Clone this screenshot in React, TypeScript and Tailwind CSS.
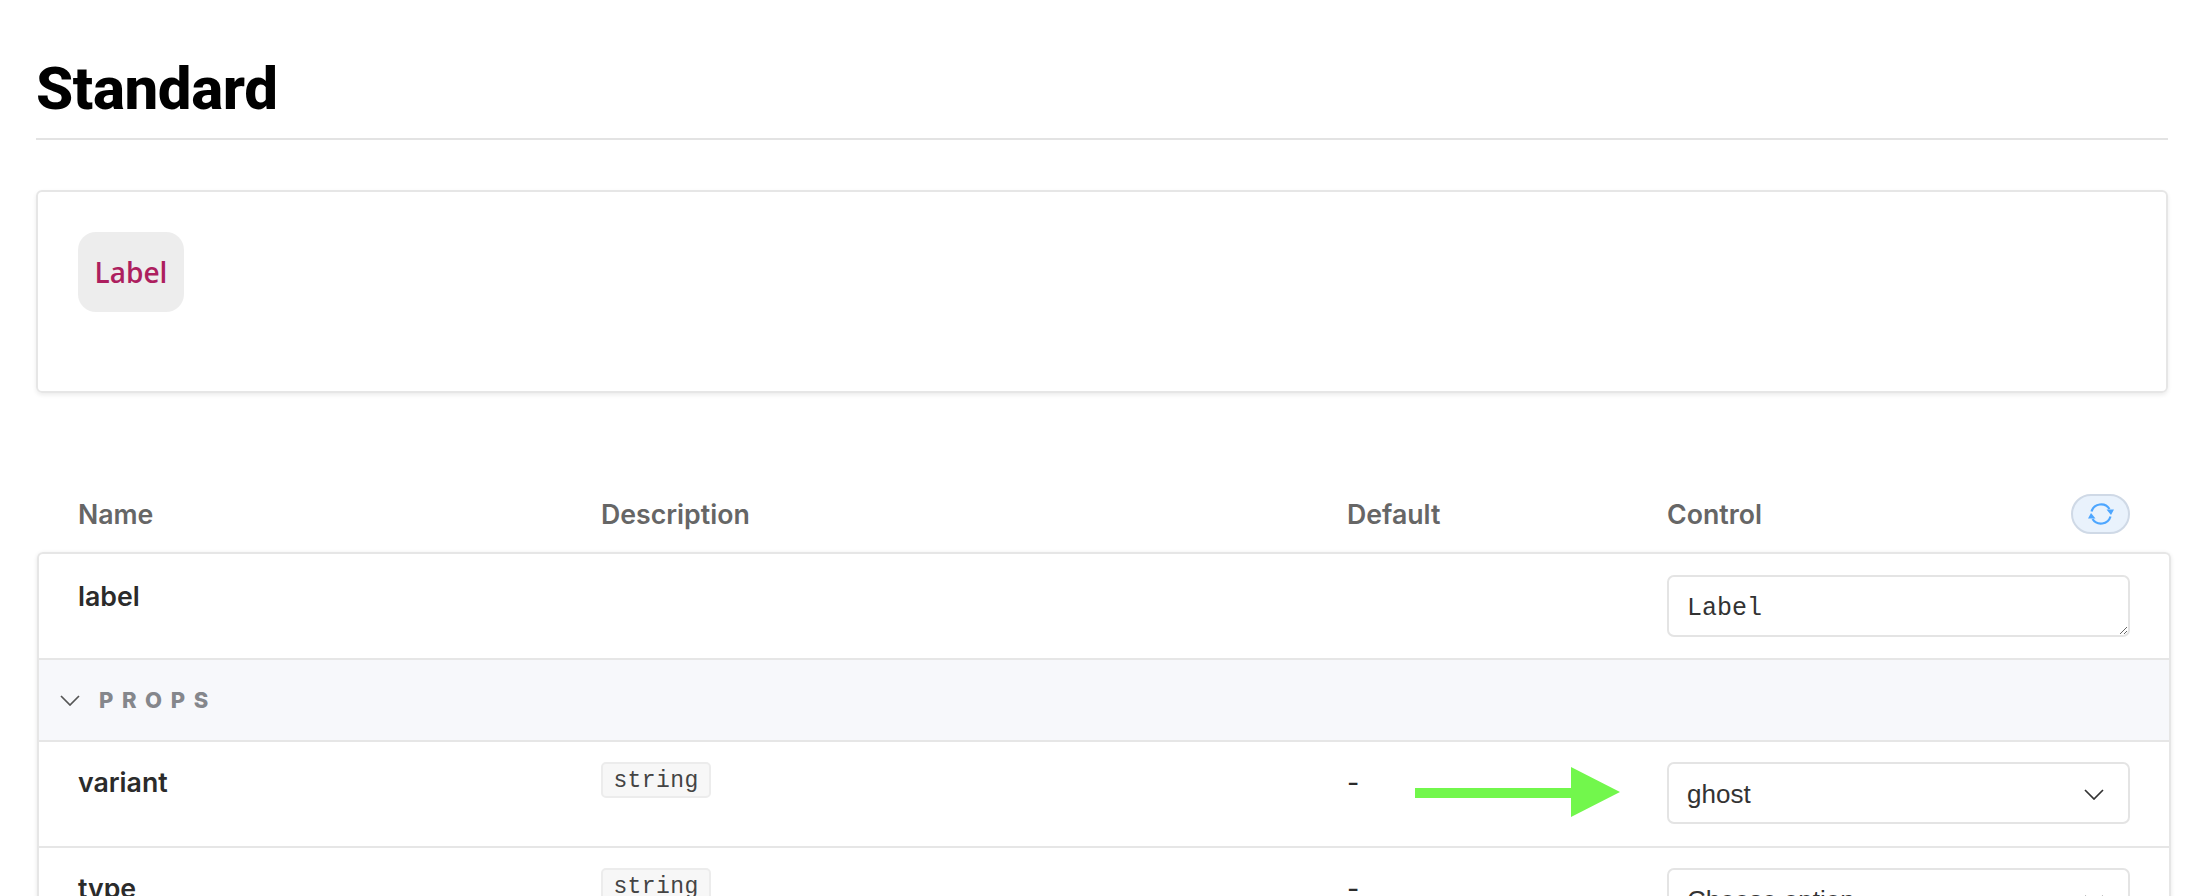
const ROW_GRID = 'grid grid-cols-[523px_746px_320px_1fr]';

function Chevron({ className }: { className: string }) {
  return (
    <svg className={className} viewBox="0 0 20 11" fill="none" stroke="currentColor" strokeWidth="1.7">
      <path d="M1 1l9 9 9-9" />
    </svg>
  );
}

function SyncIcon() {
  return (
    <svg width="28" height="26" viewBox="0 0 28 26" fill="none">
      <path d="M4.5 10.5A10 10 0 0 1 22.5 8" stroke="#4da6ff" strokeWidth="2.2" />
      <path d="M23.5 15.5A10 10 0 0 1 5.5 18" stroke="#4da6ff" strokeWidth="2.2" />
      <path d="M27 8.5l-7.5 0 4.5 5.5zM1 17.5l7.5 0-4.5-5.5z" fill="#4da6ff" />
    </svg>
  );
}

function TypeBadge() {
  return (
    <span className="flex h-[36px] w-[110px] items-center justify-center rounded-[5px] border-2 border-[#ececec] bg-[#f7f7f7] pt-[2px] font-['Liberation_Mono',monospace] text-[23px] font-normal tracking-[0.4px] text-[#444]">
      string
    </span>
  );
}

function SelectBox({ value }: { value: string }) {
  return (
    <div className="flex h-[62px] w-[463px] items-center justify-between rounded-[7px] border-2 border-[#e4e4e4] bg-white pt-[2px] pl-[18px] pr-[24px] font-['Liberation_Sans',sans-serif] text-[26px] font-normal text-[#333]">
      <span>{value}</span>
      <Chevron className="h-[11px] w-[20px] text-[#333]" />
    </div>
  );
}

export default function App() {
  return (
    <div className="relative h-[896px] w-[2206px] overflow-hidden bg-white font-['Inter',sans-serif]">
      <div className="pl-[36px]">
        <div className="flex h-[140px] w-[2132px] items-end border-b-2 border-[#e3e3e3] pb-[14px]">
          <h1 className="font-['Roboto',sans-serif] text-[60px] leading-[70px] font-extrabold tracking-[-0.4px] text-black">Standard</h1>
        </div>

        <div className="mt-[50px] h-[203px] w-[2132px] rounded-[6px] border-2 border-[#e6e6e6] pt-[40px] pl-[40px] shadow-[0_2px_4px_rgba(0,0,0,0.08)]">
          <button className="flex h-[80px] w-[106px] items-center justify-center rounded-[18px] bg-[#ededed] font-['Open_Sans',sans-serif] text-[28px] font-semibold text-[#ad1f5f]">
            Label
          </button>
        </div>

        <div className={`${ROW_GRID} mt-[101px] ml-[1px] h-[40px] w-[2134px] items-center pl-[41px] text-[26.7px] font-semibold text-[#666]`}>
          <span>Name</span>
          <span>Description</span>
          <span>Default</span>
          <div className="flex w-[463px] items-center justify-between">
            <span>Control</span>
            <button className="flex h-[40px] w-[59px] items-center justify-center rounded-full border-2 border-[#cfd9e6] bg-[#e9f2fc]">
              <SyncIcon />
            </button>
          </div>
        </div>

        <div className="mt-[18px] ml-[1px] w-[2134px] rounded-t-[6px] border-x-2 border-t-2 border-[#e6e6e6] shadow-[0_1px_4px_rgba(0,0,0,0.1)]">
          <div className={`${ROW_GRID} h-[104px] items-start pl-[39px] text-[26.7px] font-semibold text-[#2b2b2b]`}>
            <span className="mt-[22px]">label</span>
            <span />
            <span />
            <textarea
              defaultValue="Label"
              className="mt-[21px] h-[62px] w-[463px] rounded-[7px] border-2 border-[#e4e4e4] pt-[17px] pl-[18px] font-['Liberation_Mono',monospace] text-[25px] leading-[30px] font-normal text-[#333] outline-none"
            />
          </div>

          <div className="flex h-[84px] items-center border-y-2 border-[#e6e6e6] bg-[#f7f8fb] pl-[21px]">
            <Chevron className="h-[11px] w-[20px] text-[#555]" />
            <span className="ml-[19px] text-[22px] font-extrabold tracking-[8.6px] text-[#85878c]">PROPS</span>
          </div>

          <div className={`${ROW_GRID} h-[106px] items-start border-b-2 border-[#e6e6e6] pl-[39px] text-[26.7px] font-semibold text-[#2b2b2b]`}>
            <span className="mt-[20px]">variant</span>
            <div className="mt-[20px]"><TypeBadge /></div>
            <span className="mt-[20px] font-normal">-</span>
            <div className="mt-[20px]"><SelectBox value="ghost" /></div>
          </div>

          <div className={`${ROW_GRID} h-[106px] items-start pl-[39px] text-[26.7px] font-semibold text-[#2b2b2b]`}>
            <span className="mt-[20px]">type</span>
            <div className="mt-[20px]"><TypeBadge /></div>
            <span className="mt-[20px] font-normal">-</span>
            <div className="mt-[20px]"><SelectBox value="Choose option" /></div>
          </div>
        </div>
      </div>

      {/* green annotation arrow drawn over the table */}
      <svg className="absolute top-[767px] left-[1415px]" width="205" height="50" viewBox="0 0 205 50">
        <path d="M0 21h156V0l49 25-49 25V31H0z" fill="#72f74c" />
      </svg>
    </div>
  );
}
